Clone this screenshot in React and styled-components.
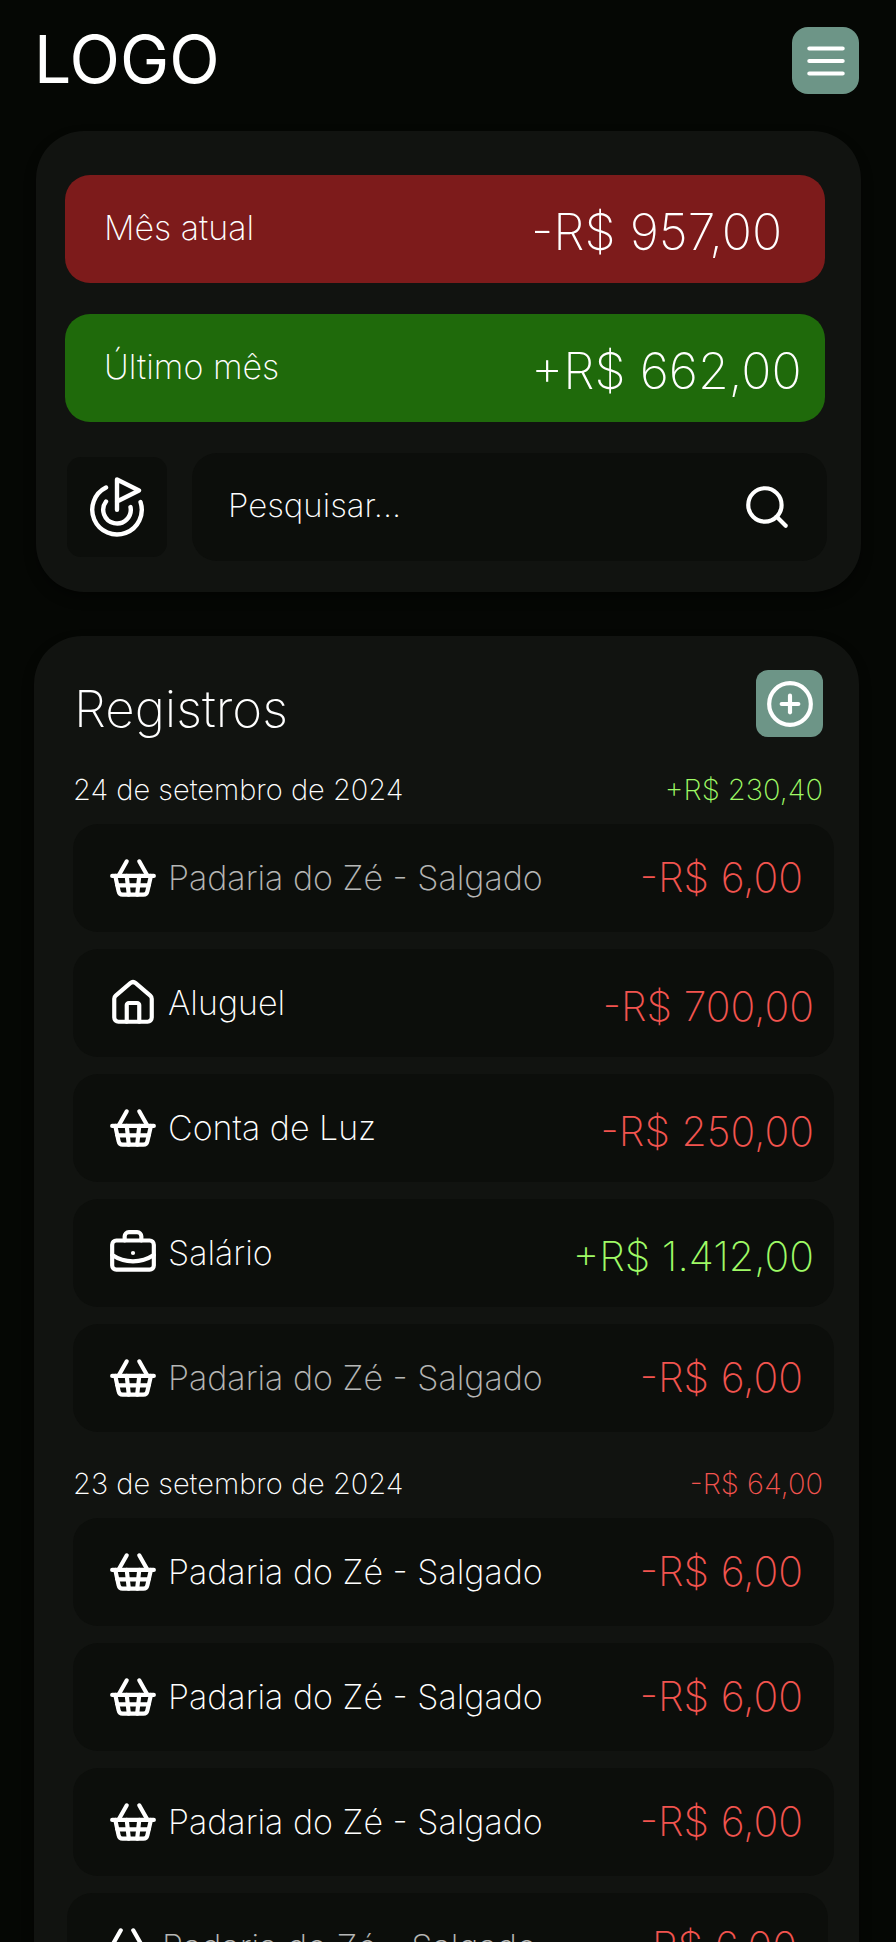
import React from "react";
import styled, { createGlobalStyle } from "styled-components";
import {
  BriefcaseBusiness,
  CirclePlus,
  Goal,
  House,
  Search,
  ShoppingBasket,
} from "lucide-react";

const color = {
  page: "#050704",
  card: "#111310",
  field: "#0c0e0b",
  accent: "#6d9587",
  expenseFill: "#7d1b1b",
  incomeFill: "#1f6a0b",
  expense: "#f2544f",
  income: "#9ffa66",
};

const GlobalStyle = createGlobalStyle`
  *, *::before, *::after { box-sizing: border-box; }
  body {
    margin: 0;
    background: ${color.page};
    color: #fff;
    font-family: Inter, "Liberation Sans", sans-serif;
    font-weight: 200;
  }
  h1, h2, h3, ul { margin: 0; padding: 0; font-weight: inherit; }
  button, input { font: inherit; color: inherit; border: 0; }
`;

const Page = styled.div`
  height: 100vh;
  overflow-y: auto;
  scrollbar-width: none;
  padding: 27px 37px 0 34px;
`;

const TopBar = styled.header`
  display: flex;
  align-items: flex-start;
  justify-content: space-between;
  margin-bottom: 37px;
`;

const Logo = styled.h1`
  font-size: 66px;
  line-height: 64px;
  font-weight: 400;
`;

const AccentButton = styled.button`
  display: grid;
  place-items: center;
  width: 67px;
  height: 67px;
  padding: 0;
  border-radius: ${(p) => p.$radius}px;
  background: ${color.accent};
  cursor: pointer;
`;

const Card = styled.section`
  border-radius: 48px;
  background: ${color.card};
  box-shadow: 0 6px 12px rgba(0, 0, 0, 0.4);
`;

const SummaryCard = styled(Card)`
  display: flex;
  flex-direction: column;
  gap: 31px;
  margin: 0 -2px 44px 2px;
  padding: 44px 36px 31px 29px;
`;

const Balance = styled.div`
  display: grid;
  grid-template-columns: 1fr 294px;
  align-items: center;
  height: 108px;
  padding-left: 39px;
  border-radius: 25px;
  background: ${(p) => (p.$income ? color.incomeFill : color.expenseFill)};
`;

const BalanceLabel = styled.span`
  font-size: 34px;
  line-height: 40px;
  padding-bottom: 2px;
`;

const BalanceValue = styled.span`
  font-size: 50px;
  line-height: 60px;
  padding-top: 6px;
  white-space: nowrap;
`;

const SearchRow = styled.form`
  display: flex;
  align-items: center;
  gap: 25px;
  margin: 0 -2px 0 2px;
`;

const GoalButton = styled.button`
  display: grid;
  place-items: center;
  flex: none;
  width: 100px;
  height: 100px;
  padding: 0;
  border-radius: 14px;
  background: ${color.field};
  cursor: pointer;
`;

const SearchBox = styled.div`
  display: flex;
  align-items: center;
  flex: 1;
  min-width: 0;
  height: 108px;
  padding: 0 35px 0 36px;
  border-radius: 25px;
  background: ${color.field};
`;

const SearchInput = styled.input`
  flex: 1;
  min-width: 0;
  padding: 0 0 4px;
  background: none;
  outline: none;
  font-size: 33px;
  line-height: 40px;
  &::placeholder { color: #fff; opacity: 1; }
`;

const SubmitButton = styled.button`
  display: grid;
  padding: 0;
  background: none;
  cursor: pointer;
`;

const RecordsCard = styled(Card)`
  display: flex;
  flex-direction: column;
  padding: 34px 31px 34px 33px;
`;

const RecordsHeader = styled.div`
  display: flex;
  align-items: flex-end;
  justify-content: space-between;
  padding: 0 5px 1px 7px;
`;

const RecordsTitle = styled.h2`
  font-size: 51px;
  line-height: 56px;
`;

const Day = styled.section`
  margin: 34px -6px 0 6px;
`;

const DayHeader = styled.div`
  display: flex;
  justify-content: space-between;
  margin-bottom: 16px;
  padding-right: 11px;
  font-size: 29px;
  line-height: 36px;
`;

const DayDate = styled.h3`
  font-size: inherit;
`;

const DayTotal = styled.span`
  color: ${(p) => (p.$income ? color.income : color.expense)};
`;

const EntryList = styled.ul`
  display: flex;
  flex-direction: column;
  gap: 17px;
  list-style: none;
`;

const OlderEntries = styled(EntryList)`
  margin-top: 17px;
`;

const Entry = styled.li`
  display: flex;
  align-items: center;
  gap: 10px;
  height: 108px;
  padding-left: 35px;
  border-radius: 25px;
  background: ${color.field};
`;

const EntryName = styled.span`
  flex: 1;
  font-size: 34px;
  line-height: 40px;
  opacity: ${(p) => (p.$dim ? 0.7 : 1)};
`;

const EntryAmount = styled.span`
  padding: ${(p) => (p.$long ? "6px 20px 0 0" : "0 31px 2px 0")};
  font-size: 41px;
  line-height: 50px;
  white-space: nowrap;
  color: ${(p) => (p.$income ? color.income : color.expense)};
`;

const icons = {
  basket: ShoppingBasket,
  home: House,
  work: BriefcaseBusiness,
};

const bakery = { icon: "basket", name: "Padaria do Zé - Salgado", amount: "-R$ 6,00" };

const days = [
  {
    date: "24 de setembro de 2024",
    total: "+R$ 230,40",
    entries: [
      { ...bakery, dim: true },
      { icon: "home", name: "Aluguel", amount: "-R$ 700,00" },
      { icon: "basket", name: "Conta de Luz", amount: "-R$ 250,00" },
      { icon: "work", name: "Salário", amount: "+R$ 1.412,00" },
      { ...bakery, dim: true },
    ],
  },
  {
    date: "23 de setembro de 2024",
    total: "-R$ 64,00",
    entries: [bakery, bakery, bakery],
  },
];

const isIncome = (value) => value.startsWith("+");

function EntryRow({ icon, name, amount, dim }) {
  const Icon = icons[icon];
  return (
    <Entry>
      <Icon size={50} aria-hidden="true" />
      <EntryName $dim={dim}>{name}</EntryName>
      <EntryAmount $income={isIncome(amount)} $long={amount.length > 8}>
        {amount}
      </EntryAmount>
    </Entry>
  );
}

function MenuIcon() {
  return (
    <svg
      width="50"
      height="50"
      viewBox="0 0 24 24"
      fill="none"
      stroke="currentColor"
      strokeWidth="2"
      strokeLinecap="round"
      aria-hidden="true"
    >
      <path d="M4 6h16M4 12h16M4 18h16" />
    </svg>
  );
}

export default function App() {
  return (
    <>
      <GlobalStyle />
      <Page>
        <TopBar>
          <Logo>LOGO</Logo>
          <AccentButton type="button" $radius={16} aria-label="Menu">
            <MenuIcon />
          </AccentButton>
        </TopBar>

        <SummaryCard>
          <Balance>
            <BalanceLabel>Mês atual</BalanceLabel>
            <BalanceValue>-R$ 957,00</BalanceValue>
          </Balance>
          <Balance $income>
            <BalanceLabel>Último mês</BalanceLabel>
            <BalanceValue>+R$ 662,00</BalanceValue>
          </Balance>
          <SearchRow onSubmit={(e) => e.preventDefault()}>
            <GoalButton type="button" aria-label="Metas">
              <Goal size={66} strokeWidth={1.6} />
            </GoalButton>
            <SearchBox>
              <SearchInput type="text" placeholder="Pesquisar..." aria-label="Pesquisar" />
              <SubmitButton type="submit" aria-label="Buscar">
                <Search size={50} />
              </SubmitButton>
            </SearchBox>
          </SearchRow>
        </SummaryCard>

        <RecordsCard>
          <RecordsHeader>
            <RecordsTitle>Registros</RecordsTitle>
            <AccentButton type="button" $radius={12} aria-label="Adicionar registro">
              <CirclePlus size={50} />
            </AccentButton>
          </RecordsHeader>
          {days.map((day) => (
            <Day key={day.date}>
              <DayHeader>
                <DayDate>{day.date}</DayDate>
                <DayTotal $income={isIncome(day.total)}>{day.total}</DayTotal>
              </DayHeader>
              <EntryList>
                {day.entries.map((entry, i) => (
                  <EntryRow key={i} {...entry} />
                ))}
              </EntryList>
            </Day>
          ))}
          <OlderEntries>
            <EntryRow {...bakery} dim />
          </OlderEntries>
        </RecordsCard>
      </Page>
    </>
  );
}
